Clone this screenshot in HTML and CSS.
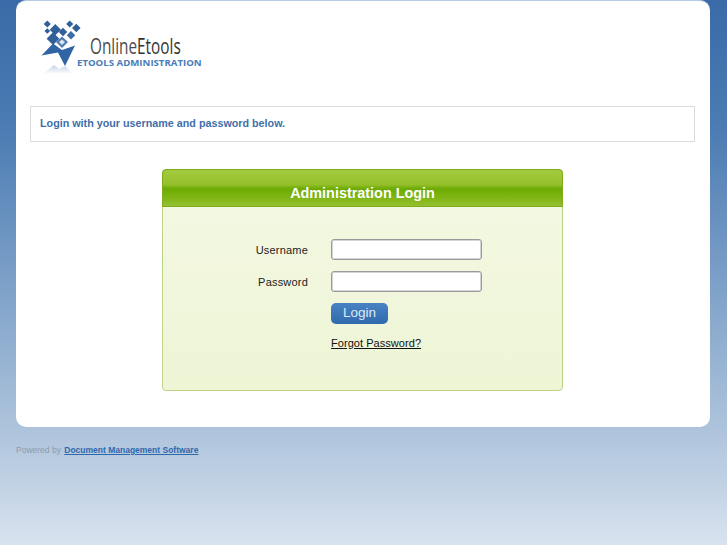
FILE: index.html
```html
<!DOCTYPE html>
<html lang="en">
<head>
<meta charset="utf-8">
<title>Administration Login</title>
<link rel="stylesheet" href="styles.css">
</head>
<body>
<main class="card">
  <div class="logo">
    <svg class="logo-mark" width="50" height="56" viewBox="0 0 50 56" aria-hidden="true">
      <defs>
        <linearGradient id="fade" x1="0" y1="0" x2="0" y2="1">
          <stop offset="0" stop-color="#c3d4e6"/>
          <stop offset="1" stop-color="#ffffff"/>
        </linearGradient>
      </defs>
      <g fill="#2f6099">
        <rect x="4.8" y="1.5" width="5" height="5" transform="rotate(45 7.3 4)"/>
        <rect x="27.2" y="1.5" width="5" height="5" transform="rotate(45 29.7 4)"/>
        <rect x="33.3" y="5" width="6" height="6" transform="rotate(45 36.3 8)"/>
        <rect x="5.3" y="9" width="4" height="4" transform="rotate(45 7.3 11)"/>
        <rect x="11.3" y="5.7" width="8" height="8" transform="rotate(45 15.3 9.7)"/>
        <rect x="20" y="9" width="6" height="6" transform="rotate(45 23 12)"/>
        <rect x="28" y="12.3" width="6" height="6" transform="rotate(45 31 15.3)" fill="#3d6da5"/>
        <rect x="8.5" y="14.2" width="9" height="9" transform="rotate(45 13 18.7)"/>
      </g>
      <path d="M1.5 35.5 13 23.5 22 30 35 25.5 25 46 18 32.5 Z" fill="#2f65a3"/>
      <path d="M16 22 22 16.5 28 22 22 28 Z" fill="#4f7cae"/>
      <path d="M19 22 22 19.5 25 22 22 25 Z" fill="#dbe6f0"/>
      <path d="M3 54 14 45 19 49 25 46 33 54 Z" fill="url(#fade)"/>
    </svg>
    <div class="logo-text">
      <div class="logo-name">Online<b>Etools</b></div>
      <div class="logo-sub">ETOOLS ADMINISTRATION</div>
    </div>
  </div>

  <p class="notice">Login with your username and password below.</p>

  <section class="panel">
    <h1 class="panel-title">Administration Login</h1>
    <form class="login-form">
      <label class="field-label" for="username">Username</label>
      <input class="field-input" id="username" type="text">
      <label class="field-label" for="password">Password</label>
      <input class="field-input" id="password" type="password">
      <button class="login-button" type="button">Login</button>
      <a class="forgot" href="#">Forgot Password?</a>
    </form>
  </section>
</main>
<footer class="footer">Powered by <a href="#">Document Management Software</a></footer>
</body>
</html>
```
FILE: styles.css
```css
* { box-sizing: border-box; }
html, body { height: 100%; }
body {
  margin: 0;
  padding: 0 17px 0 16px;
  overflow: hidden;
  font-family: "Liberation Sans", Arial, sans-serif;
  background: linear-gradient(180deg, #3a6ba8 0, #4c7cb3 130px, #7fa2c9 290px, #aec4dc 430px, #c7d6e7 500px, #d9e3ef 545px);
}
.card {
  height: 427px;
  padding: 0 14px;
  background: #fff;
  border-top: 1px solid #b4cbe3;
  border-radius: 10px;
}
.logo {
  display: flex;
  height: 105px;
  padding: 19px 0 0 10px;
}
.logo-mark { flex: none; margin-right: -13px; }
.logo-text { margin-top: 14px; }
.logo-name {
  padding-left: 13px;
  transform: scaleX(0.73);
  transform-origin: 13px 0;
  font: 21px/24px "Open Sans", sans-serif;
  color: #4b4b4b;
  white-space: nowrap;
}
.logo-name b { font-weight: 400; color: #333; }
.logo-sub {
  margin-top: -1px;
  font: 700 9.65px/11px "Open Sans", sans-serif;
  color: #4a7cb8;
  white-space: nowrap;
}
.notice {
  height: 36px;
  margin: 0 1px 27px 0;
  padding-left: 9px;
  border: 1px solid #dcdcdc;
  font-size: 10.75px;
  font-weight: 700;
  line-height: 33px;
  color: #3f6fa9;
}
.panel {
  width: 401px;
  height: 222px;
  margin-left: 132px;
  border: 1px solid #bdd488;
  border-radius: 4px;
  background: linear-gradient(180deg, #f4f8e4, #eef5d5);
}
.panel-title {
  height: 38px;
  margin: -1px -1px 0;
  border: 1px solid #80ab1d;
  border-radius: 4px 4px 0 0;
  background: linear-gradient(180deg, #a4cb3e 0, #95c02c 40%, #6dab04 52%, #76b008 65%, #94c030 100%);
  font-size: 14.4px;
  font-weight: 700;
  line-height: 46px;
  text-align: center;
  color: #fff;
  overflow: hidden;
}
.login-form {
  display: grid;
  grid-template-columns: 145px 151px;
  column-gap: 23px;
  row-gap: 11px;
  align-items: center;
  padding-top: 32px;
}
.field-label {
  text-align: right;
  font-size: 11px;
  letter-spacing: 0.2px;
  color: #222;
}
.field-input {
  width: 151px;
  height: 21px;
  padding: 2px 4px;
  border: 1px solid #9a9a9a;
  border-radius: 3px;
  background: #fff;
  box-shadow: inset 0 0 0 1px #d4d4d4;
}
.login-button, .forgot { grid-column: 2; }
.login-button {
  width: 57px;
  height: 21px;
  padding: 0 0 3px;
  border: 0;
  border-radius: 5px;
  background: linear-gradient(180deg, #4a83c2, #2f6aae);
  font: 13.5px "Liberation Sans", Arial, sans-serif;
  color: #dfe9f4;
}
.forgot {
  margin-top: 2px;
  font-size: 11px;
  letter-spacing: 0.05px;
  color: #111;
}
.footer {
  margin-top: 18px;
  font-size: 8.5px;
  color: #8d9bab;
}
.footer a {
  margin-left: 1px;
  font-weight: 700;
  color: #2f68ac;
}
```
